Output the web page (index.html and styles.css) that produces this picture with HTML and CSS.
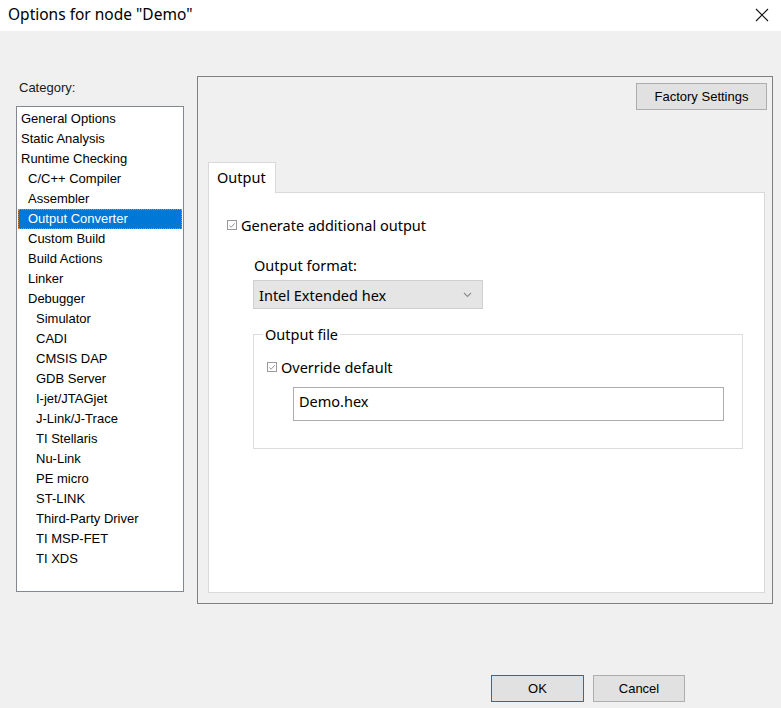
FILE: index.html
```html
<!DOCTYPE html>
<html>
<head>
<meta charset="utf-8">
<title>Options for node "Demo"</title>
<link rel="stylesheet" href="styles.css">
</head>
<body>
<div class="window">
  <div class="titlebar">
    <div class="title">Options for node "Demo"</div>
    <div class="close">
      <svg width="14" height="14" viewBox="0 0 14 14"><path d="M1 1L13 13M13 1L1 13" stroke="#111" stroke-width="1.1" fill="none"/></svg>
    </div>
  </div>
  <div class="client">
    <div class="columns">
      <div class="category">
        <div class="cat-label">Category:</div>
        <ul class="list">
          <li class="l0">General Options</li>
          <li class="l0">Static Analysis</li>
          <li class="l0">Runtime Checking</li>
          <li class="l1">C/C++ Compiler</li>
          <li class="l1">Assembler</li>
          <li class="l1 selected">Output Converter</li>
          <li class="l1">Custom Build</li>
          <li class="l1">Build Actions</li>
          <li class="l1">Linker</li>
          <li class="l1">Debugger</li>
          <li class="l2">Simulator</li>
          <li class="l2">CADI</li>
          <li class="l2">CMSIS DAP</li>
          <li class="l2">GDB Server</li>
          <li class="l2">I-jet/JTAGjet</li>
          <li class="l2">J-Link/J-Trace</li>
          <li class="l2">TI Stellaris</li>
          <li class="l2">Nu-Link</li>
          <li class="l2">PE micro</li>
          <li class="l2">ST-LINK</li>
          <li class="l2">Third-Party Driver</li>
          <li class="l2">TI MSP-FET</li>
          <li class="l2">TI XDS</li>
        </ul>
      </div>
      <div class="panel">
        <div class="panel-top">
          <button class="btn factory">Factory Settings</button>
        </div>
        <div class="tabs">
          <div class="tabstrip"><div class="tab">Output</div></div>
          <div class="tabpage">
            <div class="check">
              <span class="box"><svg width="9" height="9" viewBox="0 0 9 9"><path d="M1.5 4.5L3.5 6.5L7.5 2" stroke="#8a8a8a" stroke-width="1" fill="none"/></svg></span>
              <span>Generate additional output</span>
            </div>
            <div class="indent">
              <div class="field-label">Output format:</div>
              <div class="select">
                <span>Intel Extended hex</span>
                <svg class="chev" width="9" height="6" viewBox="0 0 9 6"><path d="M1 1L4.5 4.5L8 1" stroke="#8d8d8d" stroke-width="1.1" fill="none"/></svg>
              </div>
              <fieldset class="group">
                <legend>Output file</legend>
                <div class="check">
                  <span class="box"><svg width="9" height="9" viewBox="0 0 9 9"><path d="M1.5 4.5L3.5 6.5L7.5 2" stroke="#8a8a8a" stroke-width="1" fill="none"/></svg></span>
                  <span>Override default</span>
                </div>
                <div class="input">Demo.hex</div>
              </fieldset>
            </div>
          </div>
        </div>
      </div>
    </div>
    <div class="buttons">
      <button class="btn ok">OK</button>
      <button class="btn cancel">Cancel</button>
    </div>
  </div>
</div>
</body>
</html>
```

FILE: styles.css
```css
* { box-sizing: border-box; }
html, body { margin: 0; padding: 0; }
body {
  width: 781px;
  height: 708px;
  background: #f0f0f0;
  font-family: "Noto Sans", "Liberation Sans", sans-serif;
  color: #000;
  overflow: hidden;
}
.window { width: 781px; height: 708px; display: flex; flex-direction: column; }
.titlebar {
  height: 31px;
  background: #fff;
  display: flex;
  align-items: center;
  justify-content: space-between;
  padding: 0 12px 4px 8px;
}
.title { font-size: 15.5px; line-height: 20px; }
.close { width: 14px; height: 14px; display: flex; margin-right: 0; margin-top: 2px; }
.client { flex: 1; padding: 45px 0 0 16px; display: flex; flex-direction: column; }
.columns { display: flex; gap: 13px; align-items: flex-start; }
.category { width: 168px; }
.cat-label {
  font-family: "Liberation Sans", Arial, sans-serif;
  font-size: 13px;
  line-height: 16px;
  margin: 4px 0 0 3px;
  color: #1a1a1a;
}
.list {
  list-style: none;
  margin: 10px 0 0 0;
  padding: 2px 0 0 0;
  height: 486px;
  background: #fff;
  border: 1px solid #828790;
  font-family: "Liberation Sans", Arial, sans-serif;
  font-size: 13px;
}
.list li { height: 20px; line-height: 20px; margin: 0 1px; white-space: nowrap; }
.list .l0 { padding-left: 3px; }
.list .l1 { padding-left: 10px; }
.list .l2 { padding-left: 18px; }
.list .selected {
  background: #0078d7;
  color: #fff;
  outline: 1px dotted #c98a4b;
  outline-offset: -1px;
}
.panel {
  width: 576px;
  height: 528px;
  border: 1px solid #808080;
  padding: 6px 5px 10px 10px;
  display: flex;
  flex-direction: column;
}
.panel-top { display: flex; justify-content: flex-end; }
.btn {
  font-family: "Liberation Sans", Arial, sans-serif;
  font-size: 13px;
  color: #000;
  background: #e1e1e1;
  border: 1px solid #adadad;
  height: 27px;
  padding: 0;
  margin: 0;
}
.factory { width: 131px; }
.tabs { margin-top: 52px; margin-right: 2px; flex: 1; display: flex; flex-direction: column; }
.tabstrip { display: flex; height: 30px; }
.tab {
  width: 68px;
  height: 31px;
  background: #fff;
  border: 1px solid #d9d9d9;
  border-bottom: none;
  font-size: 14.5px;
  line-height: 28px;
  padding-left: 8px;
  position: relative;
  z-index: 1;
}
.tabpage {
  flex: 1;
  background: #fff;
  border: 1px solid #d9d9d9;
  padding: 22px 0 0 18px;
  font-size: 14.5px;
}
.check { display: flex; align-items: center; height: 20px; line-height: 20px; }
.box {
  width: 10px;
  height: 10px;
  border: 1px solid #9a9a9a;
  display: flex;
  align-items: center;
  justify-content: center;
  margin-right: 4px;
  background: #fff;
}
.box svg { display: block; }
.indent { padding-left: 26px; }
.field-label { margin-top: 20px; height: 20px; line-height: 20px; padding-left: 1px; }
.select {
  margin-top: 5px;
  width: 230px;
  height: 29px;
  background: #e5e5e5;
  border: 1px solid #cfcfcf;
  display: flex;
  align-items: center;
  justify-content: space-between;
  padding: 0 10px 0 5px;
}
.chev { display: block; }
.group {
  margin: 15px 0 0 0;
  width: 490px;
  border: 1px solid #dcdcdc;
  padding: 13px 10px 27px 13px;
  min-width: 0;
}
.group legend {
  padding: 0 2px;
  margin-left: -4px;
  line-height: 20px;
  height: 20px;
}
.input {
  margin: 10px 0 0 26px;
  width: 431px;
  height: 34px;
  border: 1px solid #adadad;
  background: #fff;
  padding: 3px 0 0 5px;
  line-height: 20px;
}
.buttons {
  margin-top: 71px;
  display: flex;
  justify-content: flex-end;
  gap: 9px;
  padding-right: 96px;
}
.ok { width: 93px; border-color: #0078d7; }
.cancel { width: 92px; }
```
